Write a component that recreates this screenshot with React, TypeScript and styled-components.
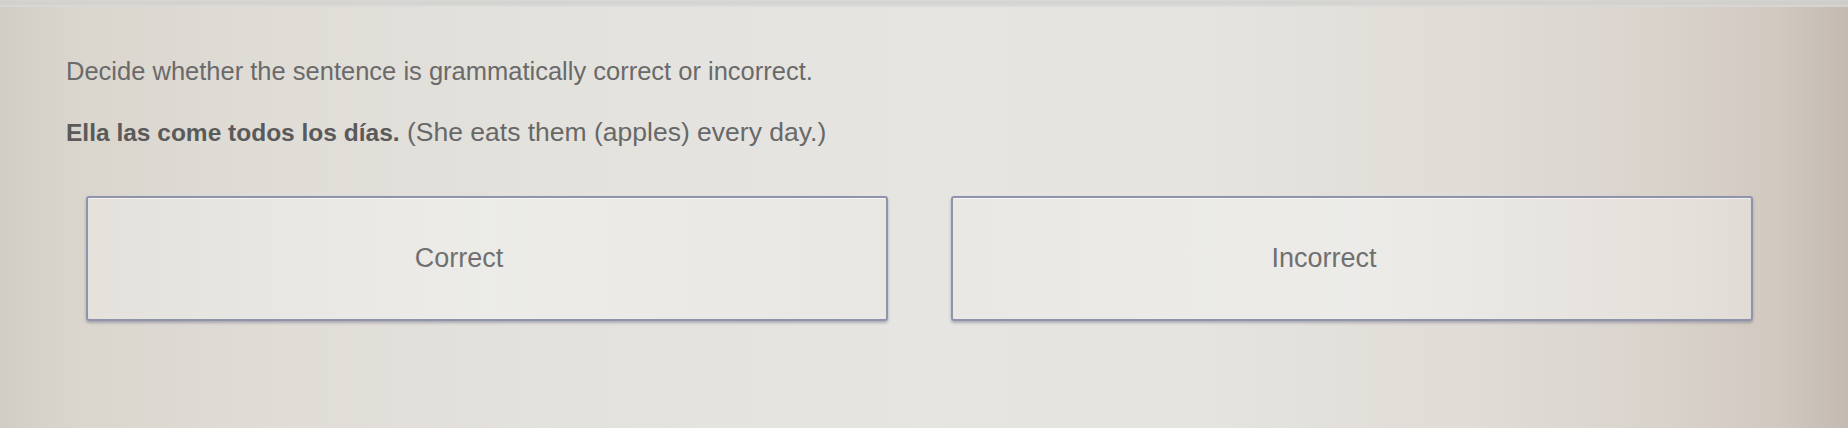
import React from "react";
import styled, { createGlobalStyle } from "styled-components";

const GlobalStyle = createGlobalStyle`
  html, body {
    margin: 0;
    padding: 0;
    height: 100%;
  }
  body {
    background: linear-gradient(
      90deg,
      #d2cdc4 0%,
      #dad6ce 4%,
      #e0ddd7 15%,
      #e4e2dd 30%,
      #e6e5e2 50%,
      #e5e4df 65%,
      #e0dcd6 80%,
      #d9d3cc 90%,
      #d2c9c1 96%,
      #c4bab1 100%
    );
    font-family: "Liberation Sans", Arial, sans-serif;
  }
  #root {
    min-height: 100%;
  }
`;

const Page = styled.div`
  min-height: 428px;
  box-sizing: border-box;
  display: flex;
  flex-direction: column;
`;

const TopEdge = styled.div`
  height: 7px;
  background: linear-gradient(180deg, #d6d6d4 0%, #cfcfcd 45%, #dcdcda 100%);
  opacity: 0.8;
`;

const Content = styled.div`
  display: flex;
  flex-direction: column;
  padding: 49px 0 0 66px;
`;

const Prompt = styled.p`
  margin: 0;
  font-size: 25.5px;
  line-height: 30px;
  color: #6a6a6a;
`;

const Sentence = styled.p`
  margin: 31px 0 0 0;
  font-size: 26.5px;
  line-height: 30px;
  color: #686868;
`;

const Spanish = styled.strong`
  font-weight: 700;
  font-size: 24.5px;
  color: #5a5a5a;
`;

const Choices = styled.div`
  display: grid;
  grid-template-columns: 802px 802px;
  column-gap: 63px;
  margin: 48px 0 0 20px;
`;

const Choice = styled.button`
  height: 125px;
  box-sizing: border-box;
  border: 2px solid #8f93ab;
  border-radius: 3px;
  background: linear-gradient(90deg, rgba(236, 234, 230, 0.55), rgba(240, 240, 238, 0.7) 50%, rgba(236, 233, 228, 0.55));
  box-shadow: 0 2px 3px rgba(70, 70, 100, 0.35), inset 0 1px 0 rgba(255, 255, 255, 0.6);
  display: flex;
  align-items: center;
  justify-content: center;
  padding: 0 56px 0 0;
  font-family: "Liberation Sans", Arial, sans-serif;
  font-size: 27px;
  color: #707070;
  cursor: pointer;
`;

export default function App() {
  return (
    <>
      <GlobalStyle />
      <Page>
        <TopEdge />
        <Content>
          <Prompt>Decide whether the sentence is grammatically correct or incorrect.</Prompt>
          <Sentence>
            <Spanish>Ella las come todos los días.</Spanish> (She eats them (apples) every day.)
          </Sentence>
          <Choices>
            <Choice type="button">Correct</Choice>
            <Choice type="button">Incorrect</Choice>
          </Choices>
        </Content>
      </Page>
    </>
  );
}
